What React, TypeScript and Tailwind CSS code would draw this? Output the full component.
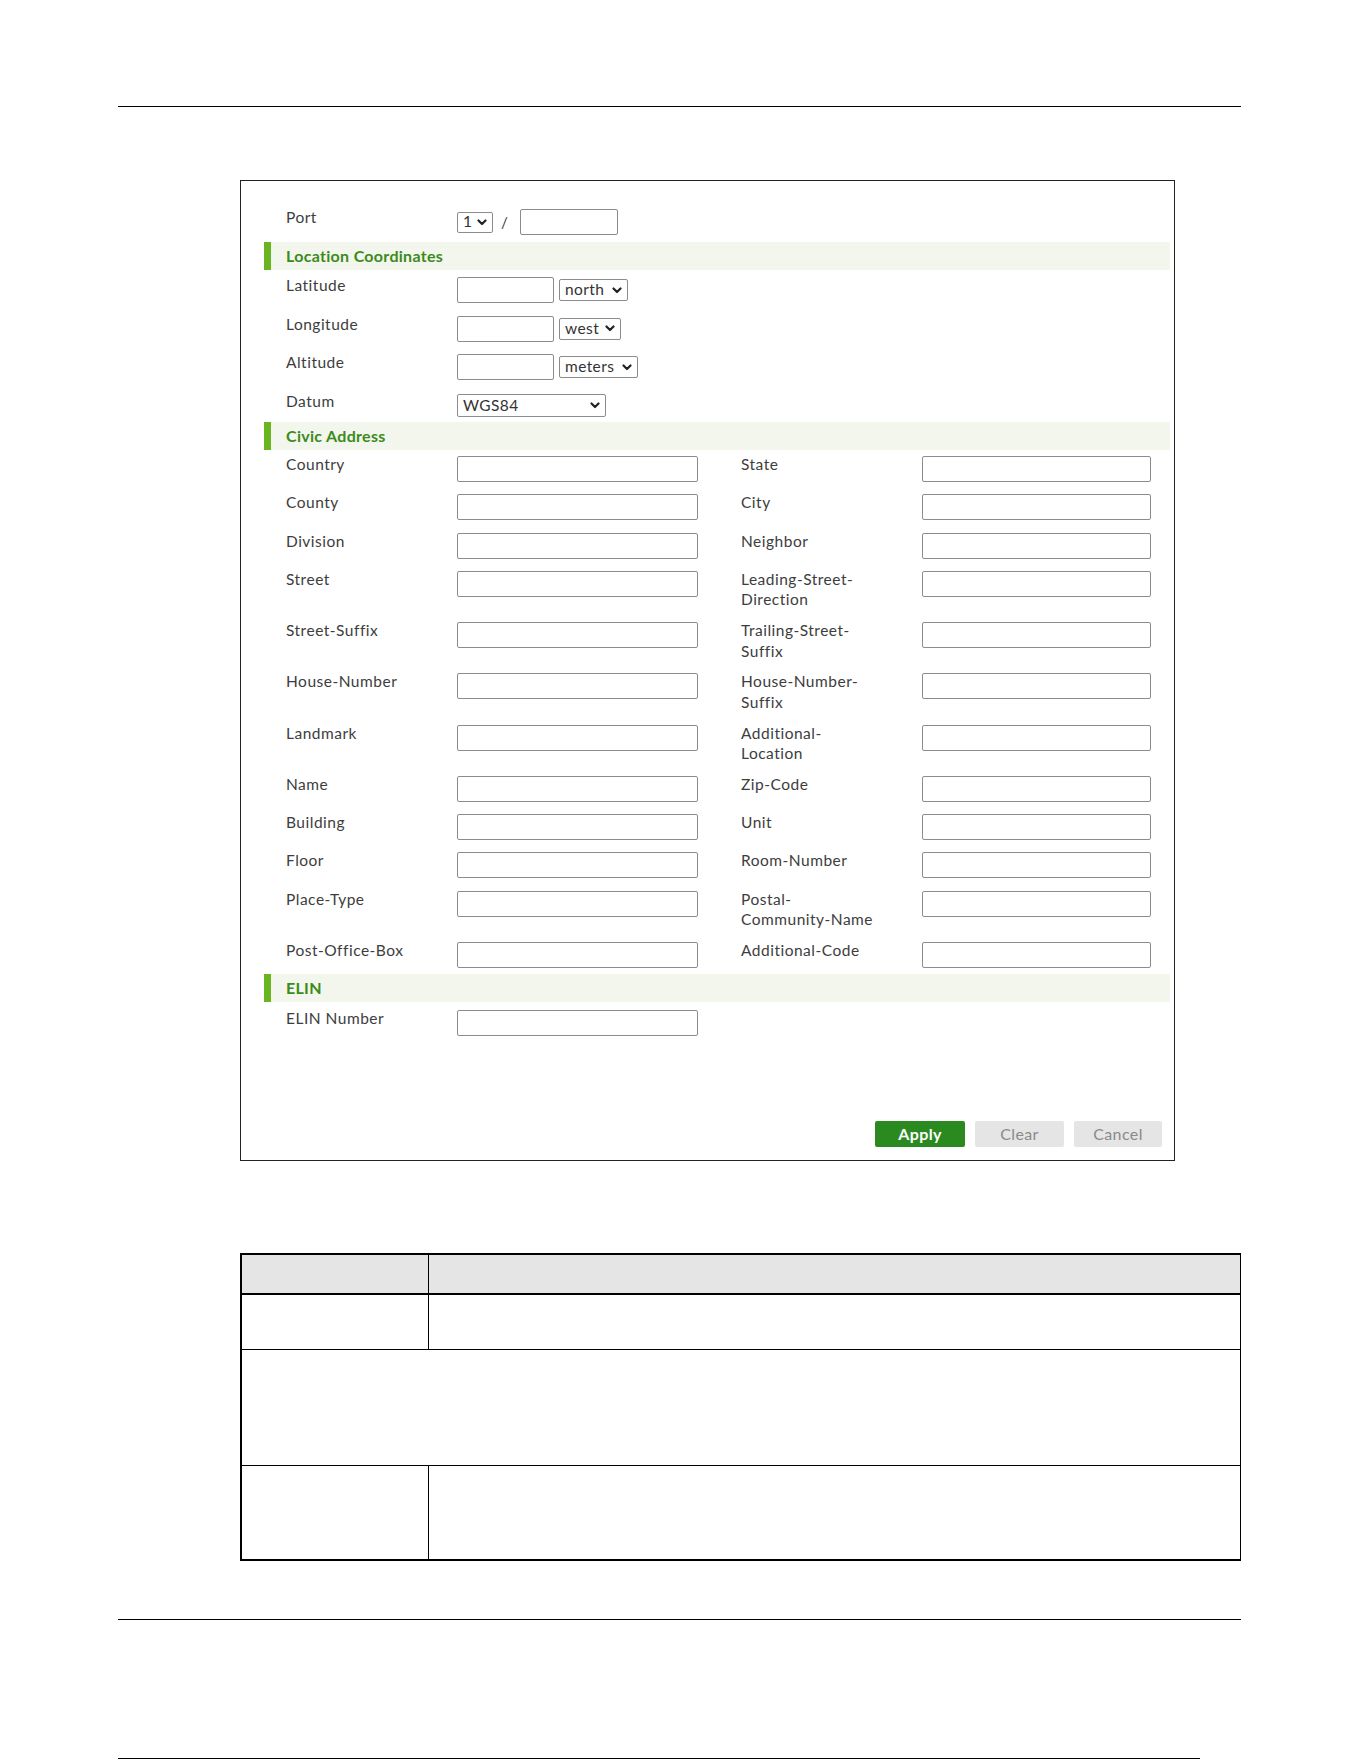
import React from 'react';

// chevron used by the fake native selects
function Chevron() {
  return (
    <svg width="10" height="7" viewBox="0 0 10 7" className="shrink-0">
      <path d="M1.5 1.5 L5 5 L8.5 1.5" fill="none" stroke="#222" strokeWidth="2.2" strokeLinecap="round" strokeLinejoin="round" />
    </svg>
  );
}

function Select({ value, className }: { value: string; className: string }) {
  return (
    <div className={`flex items-center justify-between border border-[#8c8c8c] rounded-[2px] bg-white pl-[5px] pr-[5px] text-[15.5px] tracking-[0.4px] leading-none text-[#333] ${className}`}>
      <span>{value}</span>
      <Chevron />
    </div>
  );
}

function Field({ className }: { className: string }) {
  return <div className={`h-[26px] border border-[#8c8c8c] rounded-[2px] bg-white ${className}`} />;
}

function Band({ title, className }: { title: string; className: string }) {
  return (
    <div className={`h-[28px] bg-[#f3f6ec] flex items-center ${className}`}>
      <div className="w-[7px] h-full bg-[#69b51f]" />
      <span className="ml-[15px] text-[16px] tracking-[0.3px] font-bold text-[#3b8b1c]">{title}</span>
    </div>
  );
}

function Label({ lines, className }: { lines: string[]; className: string }) {
  return (
    <div className={`text-[15.5px] tracking-[0.5px] leading-[20.5px] shrink-0 ${className}`}>
      {lines.map((l) => (
        <div key={l}>{l}</div>
      ))}
    </div>
  );
}

const coords = [
  { label: 'Latitude', select: 'north', w: 'w-[69px]' },
  { label: 'Longitude', select: 'west', w: 'w-[62px]' },
  { label: 'Altitude', select: 'meters', w: 'w-[79px]' },
];

const civic: [string[], string[]][] = [
  [['Country'], ['State']],
  [['County'], ['City']],
  [['Division'], ['Neighbor']],
  [['Street'], ['Leading-Street-', 'Direction']],
  [['Street-Suffix'], ['Trailing-Street-', 'Suffix']],
  [['House-Number'], ['House-Number-', 'Suffix']],
  [['Landmark'], ['Additional-', 'Location']],
  [['Name'], ['Zip-Code']],
  [['Building'], ['Unit']],
  [['Floor'], ['Room-Number']],
  [['Place-Type'], ['Postal-', 'Community-Name']],
  [['Post-Office-Box'], ['Additional-Code']],
];

export default function App() {
  return (
    <div className="w-[1361px] h-[1761px] bg-white font-[Lato,sans-serif] text-[#3d3d3d]">
      <div className="ml-[118px] w-[1123px] pt-[106px]">
        <div className="h-px bg-black" />

        {/* Form panel */}
        <div className="mt-[73px] ml-[122px] w-[935px] h-[981px] border border-[#222] flex flex-col pl-[23px] pr-[4px]">
          {/* Port */}
          <div className="mt-[26px] pl-[22px] flex items-start">
            <Label lines={['Port']} className="w-[171px]" />
            <div className="mt-[2px] h-[26px] flex items-center">
              <Select value="1" className="w-[36px] h-[21px]" />
              <span className="ml-[8px] text-[15px]">/</span>
              <Field className="ml-[12px] w-[98px]" />
            </div>
          </div>

          <Band title="Location Coordinates" className="mt-[7px]" />

          <div className="mt-[5px] pl-[22px] flex flex-col gap-[10.5px]">
            {coords.map((c) => (
              <div key={c.label} className="flex items-start">
                <Label lines={[c.label]} className="w-[171px]" />
                <div className="mt-[2px] h-[26px] flex items-center gap-[5px]">
                  <Field className="w-[97px]" />
                  <Select value={c.select} className={`h-[22px] ${c.w}`} />
                </div>
              </div>
            ))}
            <div className="flex items-start">
              <Label lines={['Datum']} className="w-[171px]" />
              <div className="mt-[2px] h-[26px] flex items-center">
                <Select value="WGS84" className="w-[149px] h-[23px]" />
              </div>
            </div>
          </div>

          <Band title="Civic Address" className="mt-[3px]" />

          <div className="mt-[4.5px] pl-[22px] flex flex-col gap-[10.25px]">
            {civic.map(([l, r]) => (
              <div key={l[0]} className="flex items-start">
                <Label lines={l} className="w-[171px]" />
                <Field className="mt-[2px] w-[241px]" />
                <Label lines={r} className="ml-[43px] w-[181px]" />
                <Field className="mt-[2px] w-[229px]" />
              </div>
            ))}
          </div>

          <Band title="ELIN" className="mt-[6.5px]" />

          <div className="mt-[5.3px] pl-[22px] flex items-start">
            <Label lines={['ELIN Number']} className="w-[171px]" />
            <Field className="mt-[2px] w-[241px]" />
          </div>

          <div className="mt-auto mb-[13px] pr-[8px] flex justify-end gap-[10px] text-[16px] tracking-[0.4px]">
            <button className="w-[90px] h-[26px] rounded-[2px] bg-[#2b8a1f] text-white font-bold">Apply</button>
            <button className="w-[89px] h-[26px] rounded-[2px] bg-[#e5e5e5] text-[#8a8a8a]">Clear</button>
            <button className="w-[88px] h-[26px] rounded-[2px] bg-[#e5e5e5] text-[#8a8a8a]">Cancel</button>
          </div>
        </div>

        {/* Table */}
        <div className="mt-[92px] ml-[122px] w-[1001px] border-t-2 border-l-2 border-b-2 border-r border-black flex flex-col">
          <div className="h-[40px] flex bg-[#e5e5e5] border-b-2 border-black">
            <div className="w-[187px] border-r border-black" />
            <div className="flex-1" />
          </div>
          <div className="h-[55px] flex border-b border-black">
            <div className="w-[187px] border-r border-black" />
            <div className="flex-1" />
          </div>
          <div className="h-[116px] border-b border-black" />
          <div className="h-[93px] flex">
            <div className="w-[187px] border-r border-black" />
            <div className="flex-1" />
          </div>
        </div>

        <div className="mt-[58px] h-px bg-black" />
        <div className="mt-[138px] w-[1082px] h-px bg-black" />
      </div>
    </div>
  );
}
